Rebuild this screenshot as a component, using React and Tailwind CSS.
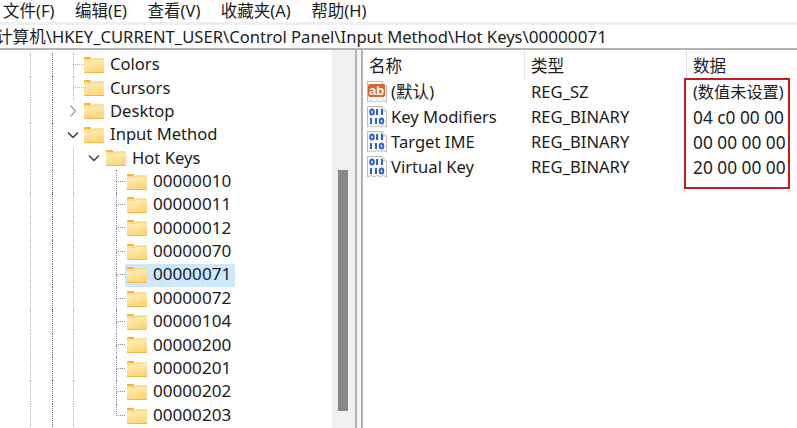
const menus = ["文件(F)", "编辑(E)", "查看(V)", "收藏夹(A)", "帮助(H)"];

const treeItems = [
  { label: "Colors", kind: "leaf" },
  { label: "Cursors", kind: "leaf" },
  { label: "Desktop", kind: "closed" },
  { label: "Input Method", kind: "open" },
  { label: "Hot Keys", kind: "sub" },
  { label: "00000010", kind: "key" },
  { label: "00000011", kind: "key" },
  { label: "00000012", kind: "key" },
  { label: "00000070", kind: "key" },
  { label: "00000071", kind: "key", selected: true },
  { label: "00000072", kind: "key" },
  { label: "00000104", kind: "key" },
  { label: "00000200", kind: "key" },
  { label: "00000201", kind: "key" },
  { label: "00000202", kind: "key" },
  { label: "00000203", kind: "key", last: true },
];

const values = [
  { name: "(默认)", type: "REG_SZ", data: "(数值未设置)", icon: "text" },
  { name: "Key Modifiers", type: "REG_BINARY", data: "04 c0 00 00", icon: "bin" },
  { name: "Target IME", type: "REG_BINARY", data: "00 00 00 00", icon: "bin" },
  { name: "Virtual Key", type: "REG_BINARY", data: "20 00 00 00", icon: "bin" },
];

function Folder({ id }) {
  return (
    <svg width="20" height="16" viewBox="0 0 20 16" className="shrink-0">
      <defs>
        <linearGradient id={id} x1="0" y1="0" x2="0.35" y2="1">
          <stop offset="0" stopColor="#fff1c4" />
          <stop offset="1" stopColor="#fcd677" />
        </linearGradient>
      </defs>
      <path d="M0 1.2C0 .5.5 0 1.2 0h5l2 2.2H0z" fill="#f5b52c" />
      <path d="M0 2.6h8.4l1.4-1H20V16H0z" fill={`url(#${id})`} />
      <path d="M0 2.6h8.4l1.4-1H20v1H9.6l-1.2 1H0z" fill="#f8cd66" />
      <path d="M0 15h20v1H0z" fill="#efba4c" />
    </svg>
  );
}

function Chevron({ open }) {
  return (
    <svg width="12" height="12" viewBox="0 0 12 12" className="shrink-0" fill="none">
      {open ? (
        <path d="M1 3.5 6 8.5 11 3.5" stroke="#3a3a3a" strokeWidth="1.4" />
      ) : (
        <path d="M3.5 .5 8.5 6 3.5 11.5" stroke="#a6a6a6" strokeWidth="1.4" />
      )}
    </svg>
  );
}

function Guide({ className }) {
  return <span className={`shrink-0 self-stretch border-l border-dotted ${className}`} />;
}

function Connector({ last }) {
  return (
    <span className="flex w-[9px] shrink-0 flex-col self-stretch">
      <span className="h-1/2 border-b border-l border-dotted border-[#8a8a8a]" />
      {!last && <span className="h-1/2 border-l border-dotted border-[#8a8a8a]" />}
    </span>
  );
}

function TreeRow({ item, index }) {
  const { label, kind, selected, last } = item;
  return (
    <div className="flex h-[23.4px] items-center pl-[30px]">
      <Guide className="w-[22px] border-[#b5b5b5]" />
      {(kind === "closed" || kind === "open") && (
        <>
          <Guide className="w-[15px] border-[#707070]" />
          <Chevron open={kind === "open"} />
          <span className="w-[5px] shrink-0" />
        </>
      )}
      {kind === "leaf" && (
        <>
          <Guide className="w-[21px] border-[#707070]" />
          <span className="flex w-[11px] shrink-0 flex-col self-stretch">
            <span className="h-1/2 border-b border-l border-dotted border-[#b5b5b5]" />
            <span className="h-1/2 border-l border-dotted border-[#b5b5b5]" />
          </span>
        </>
      )}
      {kind === "sub" && (
        <>
          <Guide className="w-[21px] border-[#707070]" />
          <Guide className="w-[15px] border-[#b5b5b5]" />
          <Chevron open />
          <span className="w-[6px] shrink-0" />
        </>
      )}
      {kind === "key" && (
        <>
          <Guide className="w-[21px] border-[#707070]" />
          <Guide className="w-[43px] border-[#b5b5b5]" />
          <Connector last={last} />
        </>
      )}
      <span
        className={`flex items-center gap-[6px] self-stretch ${
          kind === "key" ? "w-[110px] rounded-[2px] pl-[2px] text-[17.1px]" : ""
        } ${selected ? "bg-[#cce8ff]" : ""}`}
      >
        <Folder id={`folder-${index}`} />
        <span className={kind === "key" ? "pb-[2px]" : ""}>{label}</span>
      </span>
    </div>
  );
}

function ValueIcon({ type }) {
  return (
    <svg width="22" height="24" viewBox="0 0 22 24" className="shrink-0">
      <path
        d="M1.5 1.5H16l4.5 4.5v16l-3-1.5-3.2 1.5-3-1.5-3.2 1.5-3-1.5-3.6 1.5z"
        fill="#fdfdfd"
        stroke="#bdbdbd"
      />
      <path d="M16 1.5V6h4.5" fill="#eeeeee" stroke="#bdbdbd" />
      {type === "text" ? (
        <>
          <rect x="2" y="4" width="17" height="13" rx="2" fill="#e2622f" />
          <text
            x="10.5"
            y="15"
            textAnchor="middle"
            fontSize="13"
            fontWeight="700"
            fill="#ffffff"
            fontFamily="Liberation Sans, sans-serif"
          >
            ab
          </text>
        </>
      ) : (
        <g fill="none" stroke="#2d5fd6" strokeWidth="2">
          <ellipse cx="6" cy="7" rx="1.8" ry="2.6" />
          <path d="M11 4v6M16 4v6" />
          <path d="M5 13v6M10 13v6" />
          <ellipse cx="15.5" cy="16" rx="1.8" ry="2.6" />
        </g>
      )}
    </svg>
  );
}

export default function App() {
  return (
    <div
      className="relative flex h-[428px] w-[797px] flex-col overflow-hidden bg-white text-[16.6px] text-[#1c1c1c]"
      style={{ fontFamily: '"Noto Sans", "Noto Sans CJK SC", sans-serif' }}
    >
      <div className="flex h-[22px] shrink-0 gap-[20.5px] pt-[1px] pl-[3px] text-[16.5px] leading-[20px]">
        {menus.map((m) => (
          <span key={m}>{m}</span>
        ))}
      </div>
      <div className="h-[3px] shrink-0 bg-[#f0f0f0]" />
      <div className="flex h-[25px] shrink-0 items-center overflow-hidden border-b-2 border-[#b4b4b4] whitespace-nowrap">
        <span className="-ml-[4px]">
          计算机\HKEY_CURRENT_USER\Control Panel\Input Method\Hot Keys\<span className="text-[17.1px]">00000071</span>
        </span>
      </div>

      <div className="flex min-h-0 flex-1">
        <div className="w-[332px] shrink-0 overflow-hidden pt-[3px]">
          {treeItems.map((item, i) => (
            <TreeRow key={item.label} item={item} index={i} />
          ))}
        </div>

        <div className="w-[23px] shrink-0 bg-[#f0f0f0] pt-[120px] pl-[6px]">
          <div className="h-[241px] w-[10px] bg-[#878787]" />
        </div>
        <div className="w-[8px] shrink-0 border-x-2 border-[#b0b3b8] bg-[#f4f4f4]" />

        <div className="min-w-0 flex-1">
          <div className="flex h-[30px] items-center">
            <span className="flex h-full w-[162px] items-center border-r border-[#e5e5e5] pt-[2px] pl-[6px]">名称</span>
            <span className="flex h-full w-[162px] items-center border-r border-[#e5e5e5] pt-[2px] pl-[6px]">类型</span>
            <span className="pt-[2px] pl-[6px]">数据</span>
          </div>
          {values.map((v) => (
            <div key={v.name} className="flex h-[25px] items-center">
              <span className="flex w-[162px] items-center gap-[3px] pl-[3px]">
                <ValueIcon type={v.icon} />
                {v.name}
              </span>
              <span className="w-[162px] pl-[6px]">{v.type}</span>
              <span className={`pl-[6px] whitespace-nowrap ${v.icon === "bin" ? "text-[17.3px]" : "text-[16.2px]"}`}>
                {v.data}
              </span>
            </div>
          ))}
        </div>
      </div>

      <div className="absolute top-[78px] left-[684px] h-[111px] w-[106px] border-2 border-[#c41a1a]" />
    </div>
  );
}
